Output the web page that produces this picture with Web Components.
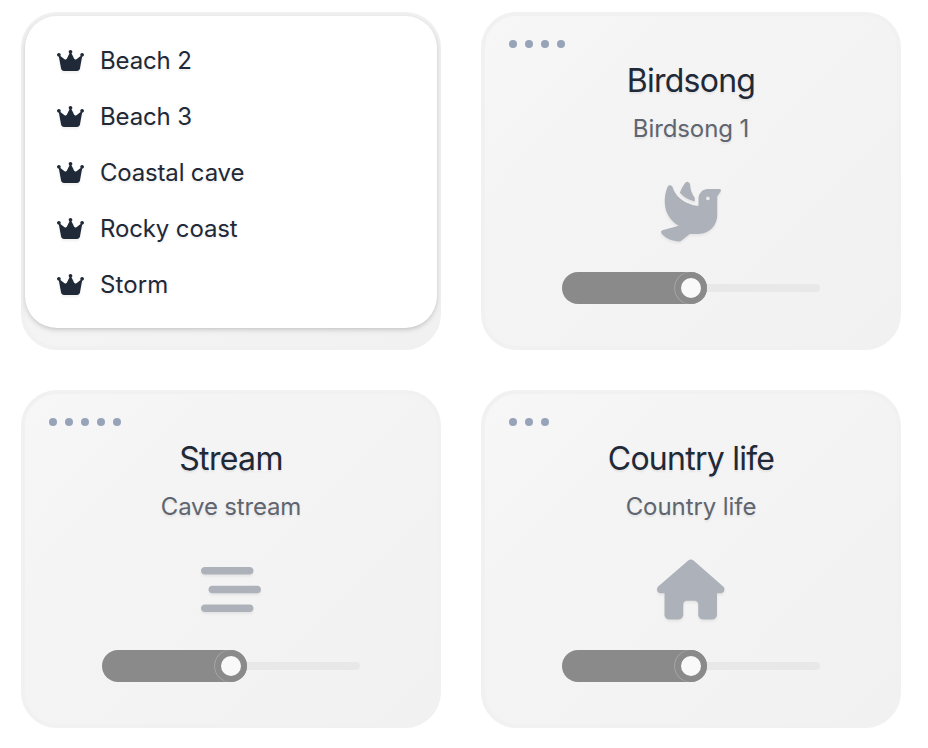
<!DOCTYPE html>
<html lang="en"><head><meta charset="utf-8"><title>Sounds</title>
<style>body{margin:0;background:#fff;font-family:Inter,"Liberation Sans",sans-serif;color:#1f2937}</style></head><body>
<sound-grid>
<sound-card><variant-menu>
<variant-item style="--ls:-.15px">Beach 2</variant-item><variant-item style="--ls:-.15px">Beach 3</variant-item><variant-item style="--ls:-.18px">Coastal cave</variant-item><variant-item style="--ls:-.13px">Rocky coast</variant-item><variant-item style="--ls:.1px">Storm</variant-item>
</variant-menu></sound-card>
<sound-card><sound-panel dots="4" icon="dove" style="--sls:-.1px"><span slot="title">Birdsong</span><span slot="sub">Birdsong 1</span></sound-panel></sound-card>
<sound-card><sound-panel dots="5" icon="stream" style="--sls:-.17px;--tls:-.65px"><span slot="title">Stream</span><span slot="sub">Cave stream</span></sound-panel></sound-card>
<sound-card><sound-panel dots="3" icon="house"><span slot="title">Country life</span><span slot="sub">Country life</span></sound-panel></sound-card>
</sound-grid>
<script>
const ICONS={
dove:[512,'M160.8 96.5c14 17 31 30.9 49.5 42.2c25.9 15.8 53.7 25.9 77.7 31.6V138.8C265.8 108.5 250 71.5 248.6 28c-.4-11.3-7.5-21.5-18.4-24.4c-7.6-2-15.8-.2-21 5.8c-13.3 15.4-32.7 44.6-48.4 87.2zM320 144v30.6l0 0v1.3l0 0 0 32.1c-60.8-5.1-185-43.8-219.3-157.2C97.4 40 87.9 32 76.6 32c-7.9 0-15.3 3.9-18.8 11C46.8 65.9 32 112.1 32 176c0 116.9 80.1 180.5 118.4 202.8L11.8 416.6C6.7 418 2.6 421.8 .9 426.8s-.8 10.6 2.3 14.8C21.7 466.2 77.3 512 160 512c3.6 0 7.2-1.2 10-3.5L245.6 448H320c88.4 0 160-71.6 160-160V128l29.9-44.9c1.3-2 2.1-4.4 2.1-6.8c0-6.8-5.5-12.3-12.3-12.3H400c-44.2 0-80 35.8-80 80zm80-16a16 16 0 1 1 0 32 16 16 0 1 1 0-32z'],
stream:[512,'M0 96C0 78.3 14.3 64 32 64H416c17.7 0 32 14.3 32 32s-14.3 32-32 32H32C14.3 128 0 113.7 0 96zM64 256c0-17.7 14.3-32 32-32H480c17.7 0 32 14.3 32 32s-14.3 32-32 32H96c-17.7 0-32-14.3-32-32zM448 416c0 17.7-14.3 32-32 32H32c-17.7 0-32-14.3-32-32s14.3-32 32-32H416c17.7 0 32 14.3 32 32z'],
house:[576,'M575.8 255.5c0 18-15 32.1-32 32.1h-32l.7 160.2c0 2.7-.2 5.4-.5 8.1V472c0 22.1-17.9 40-40 40H456c-1.1 0-2.2 0-3.3-.1c-1.4 .1-2.8 .1-4.2 .1H416 392c-22.1 0-40-17.9-40-40V448 384c0-17.7-14.3-32-32-32H256c-17.7 0-32 14.3-32 32v64 24c0 22.1-17.9 40-40 40H160 128.1c-1.5 0-3-.1-4.5-.2c-1.2 .1-2.4 .2-3.6 .2H104c-22.1 0-40-17.9-40-40V360c0-.9 0-1.9 .1-2.8V287.6H32c-18 0-32-14-32-32.1c0-9 3-17 10-24L266.4 8c7-7 15-8 22-8s15 2 21 7L564.8 231.5c8 7 12 15 11 24z'],
crown:[576,'M309 106c11.4-7 19-19.7 19-34c0-22.1-17.9-40-40-40s-40 17.9-40 40c0 14.4 7.6 27 19 34L209.7 220.6c-9.1 18.2-32.7 23.4-48.6 10.7L72 160c5-6.7 8-15 8-24c0-22.1-17.9-40-40-40S0 113.9 0 136s17.9 40 40 40c.2 0 .5 0 .7 0L86.4 427.4c5.5 30.4 32 52.6 63 52.6H426.6c30.9 0 57.4-22.1 63-52.6L535.3 176c.2 0 .5 0 .7 0c22.1 0 40-17.9 40-40s-17.9-40-40-40s-40 17.9-40 40c0 9 3 17.3 8 24l-89.1 71.3c-15.9 12.7-39.5 7.5-48.6-10.7L309 106z']};
const define=(name,html)=>customElements.define(name,class extends HTMLElement{
 constructor(){super();this.attachShadow({mode:'open'})}
 connectedCallback(){this.shadowRoot.innerHTML=typeof html==='function'?html(this):html}
});
define('fa-icon',el=>{const [w,d]=ICONS[el.getAttribute('name')];return `<style>:host{display:block;height:var(--size);line-height:0}svg{height:100%;width:auto;display:block;overflow:visible;filter:drop-shadow(0 2px 1px rgba(0,0,0,.06))}</style><svg viewBox="0 0 ${w} 512" fill="currentColor" style="aspect-ratio:${w}/512"><path transform="translate(0 ${w===576&&el.getAttribute('name')==='crown'?8:4})" d="${d}"/></svg>`});
define('sound-grid',`<style>:host{display:grid;grid-template-columns:420px 420px;grid-auto-rows:338px;gap:40px;padding:12px 0 0 21px}</style><slot></slot>`);
define('sound-card',`<style>:host{display:block;box-sizing:border-box;border:4px solid #f1f1f1;border-radius:36px;background:linear-gradient(135deg,#f7f7f7,#f4f4f4 30%,#f3f3f3 65%,#f1f1f1)}</style><slot></slot>`);
define('variant-menu',`<style>:host{display:flex;flex-direction:column;box-sizing:border-box;height:312px;padding:16px 32px;border-radius:32px;background:#fff;box-shadow:0 2px 6px rgba(0,0,0,.1),0 2px 4px -1px rgba(0,0,0,.12)}</style><slot></slot>`);
define('variant-item',`<style>:host{display:flex;align-items:center;height:56px;gap:16px;font-size:24px;font-weight:430;letter-spacing:var(--ls);text-shadow:0 2px 2px rgba(0,0,0,.07)}fa-icon{--size:24px}</style><fa-icon name="crown"></fa-icon><span><slot></slot></span>`);
define('volume-slider',`<style>:host{display:flex;align-items:center;width:258px;height:32px}
.fill{box-sizing:border-box;width:145px;height:32px;border-radius:16px;background:#8a8a8a;display:flex;justify-content:flex-end}
.knob{box-sizing:border-box;width:32px;height:32px;border-radius:50%;border:6px solid #8a8a8a;background:#f9f9f9;box-shadow:-.5px 0 0 .3px rgba(255,255,255,.28)}
.rest{flex:1;height:8px;border-radius:0 4px 4px 0;background:#e8e8e8}</style><div class="fill"><div class="knob"></div></div><div class="rest"></div>`);
define('sound-panel',el=>`<style>:host{display:flex;flex-direction:column;align-items:center;padding-top:24px}
.dots{display:flex;gap:8px;align-self:flex-start;margin-left:24px}i{width:8px;height:8px;border-radius:50%;background:#97a3b8}
.t{margin-top:13px;font-size:32px;line-height:40px;font-weight:430;letter-spacing:var(--tls,-.75px);text-shadow:0 2px 2px rgba(0,0,0,.07)}
.s{margin-top:12px;font-size:24px;line-height:32px;font-weight:430;color:#5f656f;letter-spacing:var(--sls,-.08px);text-shadow:0 2px 2px rgba(0,0,0,.07)}
fa-icon{--size:60px;color:#adb1ba;margin:36px 0 31px}</style>
<div class="dots">${'<i></i>'.repeat(+el.getAttribute('dots'))}</div><div class="t"><slot name="title"></slot></div><div class="s"><slot name="sub"></slot></div><fa-icon name="${el.getAttribute('icon')}"></fa-icon><volume-slider></volume-slider>`);
</script></body></html>
